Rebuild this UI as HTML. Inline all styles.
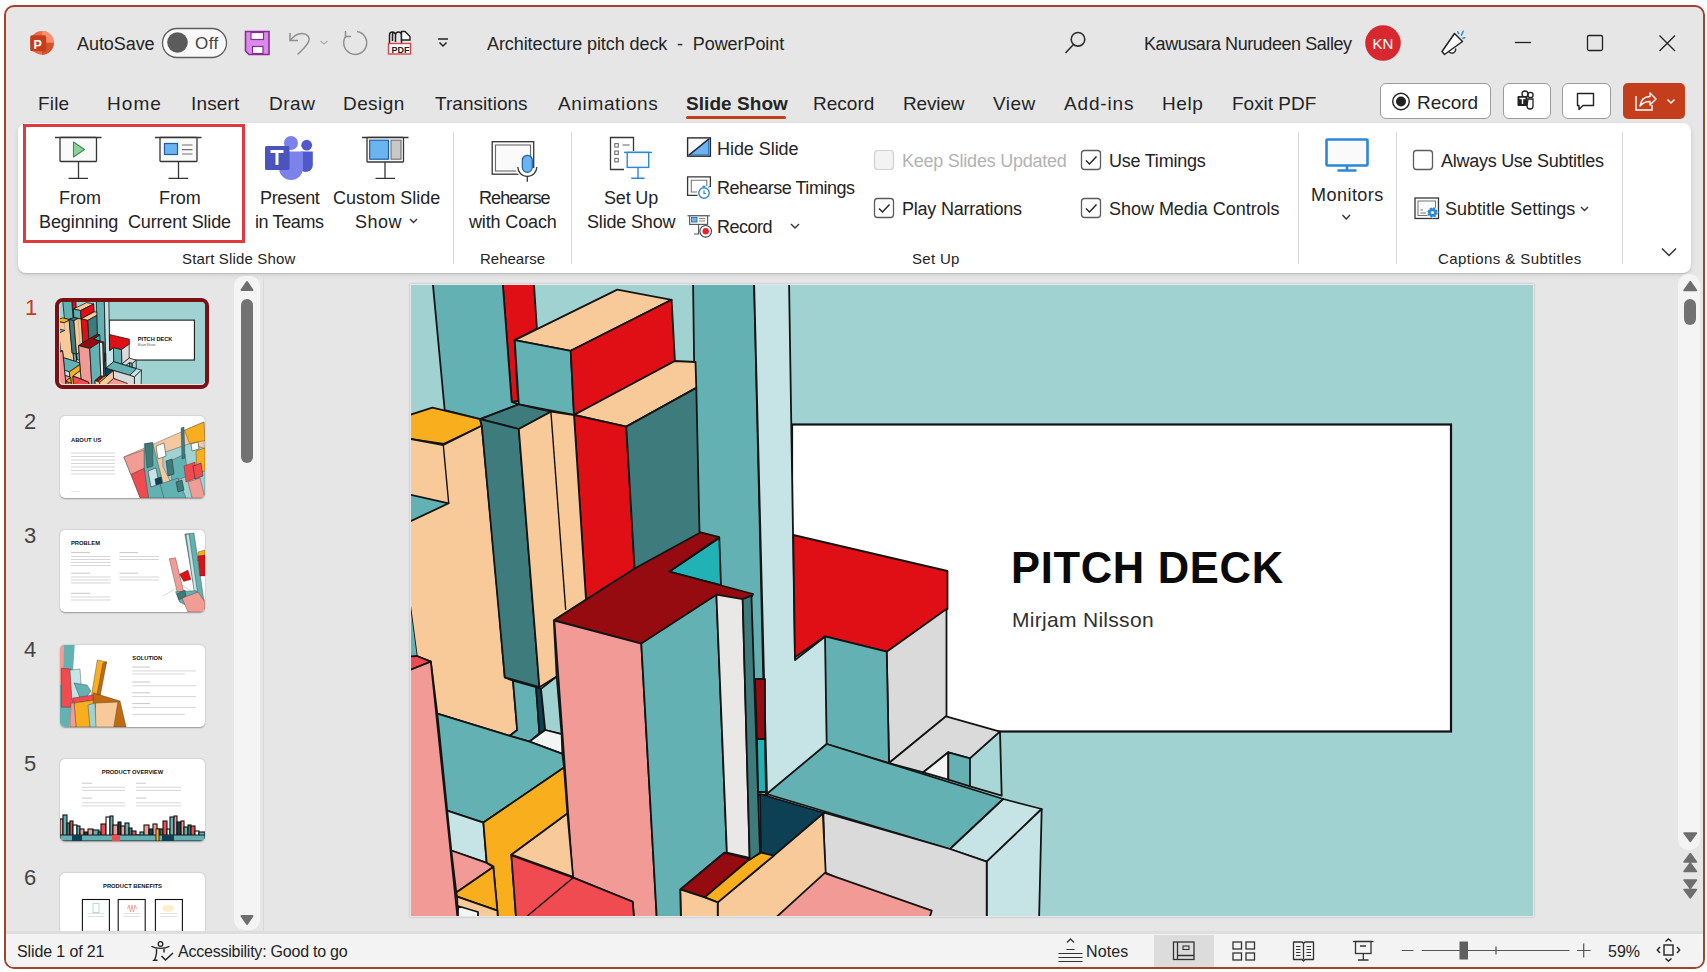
<!DOCTYPE html>
<html><head><meta charset="utf-8">
<style>
*{margin:0;padding:0;box-sizing:border-box}
html,body{width:1707px;height:972px;overflow:hidden;background:#fff}
body{font-family:"Liberation Sans",sans-serif;color:#242424;position:relative}
.a{position:absolute}
.t{position:absolute;white-space:nowrap;line-height:1}
#win{position:absolute;left:4px;top:5px;width:1701px;height:964px;border:2px solid #a4432d;border-radius:10px;background:#e6e6e6;overflow:hidden}
.tab{font-size:19px;top:94px}
.rb{font-size:18px}
.grp{font-size:15px}
svg{position:absolute;overflow:visible}
</style></head><body>
<div id="win"></div>

<!-- ============ TITLE BAR ============ -->
<svg style="left:0;top:0" width="1707" height="80">
  <!-- PowerPoint logo -->
  <circle cx="42" cy="42.8" r="11.9" fill="#ed6c47"/>
  <path d="M42 30.9 A11.9 11.9 0 0 1 53.9 42.8 L42 42.8Z" fill="#ff8f6b"/>
  <path d="M42 42.8 L53.9 42.8 A11.9 11.9 0 0 1 42 54.7Z" fill="#d35230"/>
  <rect x="30.2" y="35.2" width="16" height="16" rx="1.8" fill="#c43e1c"/>
  <text x="33.6" y="48.6" font-family="Liberation Sans" font-weight="bold" font-size="12.5" fill="#fff">P</text>
  <!-- toggle -->
  <rect x="162.5" y="28.5" width="64" height="29" rx="14.5" fill="#fafafa" stroke="#5e5e5e" stroke-width="1.3"/>
  <circle cx="177.5" cy="42.5" r="10.3" fill="#5b5b5b"/>
  <!-- save -->
  <path d="M245.5 31.5 H269 V54.5 H249 L245.5 51Z" fill="#d98be8" stroke="#8b2a9b" stroke-width="1.6"/>
  <rect x="251" y="32.5" width="12.5" height="7" fill="#fff" stroke="#8b2a9b" stroke-width="1.2"/>
  <rect x="252.5" y="46.5" width="10.5" height="7" fill="#fff" stroke="#8b2a9b" stroke-width="1.2"/>
  <!-- undo -->
  <path d="M290 33 V40.5 H298" fill="none" stroke="#8f8f8f" stroke-width="1.5"/>
  <path d="M290.5 40 C296 33 304 31.5 308 36 C311 40 308 45 297.5 54.5" fill="none" stroke="#8f8f8f" stroke-width="1.5"/>
  <path d="M320.5 41 L324 44 L327.5 41" fill="none" stroke="#a8a8a8" stroke-width="1.1"/>
  <!-- redo -->
  <path d="M346 36 A11.5 11.5 0 1 0 357 31.5" fill="none" stroke="#8f8f8f" stroke-width="1.5"/>
  <path d="M345.5 31 V36.5 H351" fill="none" stroke="#8f8f8f" stroke-width="1.5"/>
  <!-- pdf -->
  <path d="M389.5 43 V35 A3 3 0 0 1 395.5 35 V42 M392.5 41 V34.5 A1.5 1.5 0 0 1 395.5 34 M395.5 42 V35 A3 3 0 0 1 401.5 35 V43" fill="none" stroke="#222" stroke-width="1.5"/>
  <path d="M401.5 31.5 H405 L410 36.5 V40 H401.5Z" fill="#fff" stroke="#222" stroke-width="1.4"/>
  <rect x="388.5" y="43.5" width="22" height="10.5" fill="#fff" stroke="#d9434a" stroke-width="1.4"/>
  <text x="391.5" y="52.5" font-family="Liberation Sans" font-size="9" font-weight="bold" fill="#222">PDF</text>
  <!-- customize -->
  <path d="M438 39 H448" stroke="#222" stroke-width="1.5"/>
  <path d="M439.5 42.5 L443 46 L446.5 42.5" fill="none" stroke="#222" stroke-width="1.5"/>
  <!-- search -->
  <circle cx="1078" cy="39.3" r="6.8" fill="none" stroke="#2e2e2e" stroke-width="1.6"/>
  <path d="M1073.5 44.5 L1065.5 53" stroke="#2e2e2e" stroke-width="1.6"/>
  <!-- KN -->
  <circle cx="1383" cy="43" r="17.8" fill="#d7282f"/>
  <text x="1372.5" y="49" font-family="Liberation Sans" font-size="15" fill="#fff">KN</text>
  <!-- megaphone -->
  <path d="M1448.5 50.5 A3.6 3.6 0 0 0 1455.5 48.5" fill="#fafafa" stroke="#222" stroke-width="1.4"/>
  <path d="M1442 51.5 L1454.5 33.5 L1462.5 41.5 L1444.5 54.5Z" fill="#fafafa" stroke="#222" stroke-width="1.5" stroke-linejoin="round"/>
  <path d="M1457.8 31.8 L1458.6 33.5 M1463.2 31.2 L1461.4 35.2 M1464.8 37.8 L1462.8 38.2" stroke="#2b88d8" stroke-width="1.5" stroke-linecap="round"/>
  <!-- window controls -->
  <path d="M1515 42.5 H1531" stroke="#222" stroke-width="1.3"/>
  <rect x="1587.5" y="35.5" width="15" height="15" rx="1.5" fill="none" stroke="#222" stroke-width="1.3"/>
  <path d="M1659.5 35.5 L1675 51 M1675 35.5 L1659.5 51" stroke="#222" stroke-width="1.3"/>
</svg>
<div class="t" style="left:77px;top:35px;font-size:18px;letter-spacing:-0.06px">AutoSave</div>
<div class="t" style="left:195px;top:35px;font-size:17px;color:#444;letter-spacing:0.41px">Off</div>
<div class="t" style="left:487px;top:35px;font-size:18px;letter-spacing:-0.08px">Architecture pitch deck&nbsp; - &nbsp;PowerPoint</div>
<div class="t" style="left:1144px;top:35px;font-size:18px;letter-spacing:-0.44px">Kawusara Nurudeen Salley</div>

<!-- ============ TABS ============ -->
<div class="t tab" style="left:38px;letter-spacing:0.17px">File</div>
<div class="t tab" style="left:107px;letter-spacing:1.08px">Home</div>
<div class="t tab" style="left:191px;letter-spacing:0.16px">Insert</div>
<div class="t tab" style="left:269px;letter-spacing:0.51px">Draw</div>
<div class="t tab" style="left:343px;letter-spacing:0.41px">Design</div>
<div class="t tab" style="left:435px;letter-spacing:0.04px">Transitions</div>
<div class="t tab" style="left:558px;letter-spacing:0.65px">Animations</div>
<div class="t tab" style="left:686px;font-weight:bold;letter-spacing:0.06px">Slide Show</div>
<div class="a" style="left:686px;top:116px;width:100px;height:3px;background:#c43e1c;border-radius:2px"></div>
<div class="t tab" style="left:813px;letter-spacing:0.01px">Record</div>
<div class="t tab" style="left:903px;letter-spacing:-0.15px">Review</div>
<div class="t tab" style="left:993px;letter-spacing:0.44px">View</div>
<div class="t tab" style="left:1064px;letter-spacing:0.83px">Add-ins</div>
<div class="t tab" style="left:1162px;letter-spacing:0.61px">Help</div>
<div class="t tab" style="left:1232px;letter-spacing:-0.02px">Foxit PDF</div>

<!-- right buttons -->
<div class="a" style="left:1380px;top:83px;width:111px;height:36px;background:#fff;border:1px solid #9c9c9c;border-radius:6px"></div>
<div class="a" style="left:1503px;top:83px;width:48px;height:36px;background:#fff;border:1px solid #9c9c9c;border-radius:6px"></div>
<div class="a" style="left:1562px;top:83px;width:49px;height:36px;background:#fff;border:1px solid #9c9c9c;border-radius:6px"></div>
<div class="a" style="left:1623px;top:83px;width:62px;height:36px;background:#c43e1c;border-radius:5px"></div>
<svg style="left:0;top:0" width="1707" height="130">
  <circle cx="1401" cy="101.5" r="8.3" fill="none" stroke="#222" stroke-width="1.4"/>
  <circle cx="1401" cy="101.5" r="5" fill="#222"/>
  <!-- teams mono -->
  <circle cx="1530.5" cy="95" r="2.6" fill="none" stroke="#222" stroke-width="1.3"/>
  <path d="M1528 99 H1533 V106 A3 3 0 0 1 1527 106Z" fill="none" stroke="#222" stroke-width="1.3"/>
  <circle cx="1525" cy="94" r="3" fill="none" stroke="#222" stroke-width="1.3"/>
  <rect x="1517.5" y="96" width="10" height="10" rx="1" fill="#222"/>
  <path d="M1519.5 98.5 H1525.5 M1522.5 98.5 V104" stroke="#fff" stroke-width="1.4"/>
  <!-- comment -->
  <path d="M1577.5 93.5 H1593.5 V105.5 H1583 L1579 109.5 V105.5 H1577.5Z" fill="none" stroke="#222" stroke-width="1.4" stroke-linejoin="round"/>
  <!-- share -->
  <path d="M1636 96 V110 H1652 V105" fill="none" stroke="#fff" stroke-width="1.5"/>
  <path d="M1640 106 C1641 99 1645 96.5 1650 96.5 V93 L1656 99 L1650 105 V101.5 C1646 101.5 1642.5 103 1640 106Z" fill="none" stroke="#fff" stroke-width="1.4" stroke-linejoin="round"/>
  <path d="M1667.5 99.5 L1671 103 L1674.5 99.5" fill="none" stroke="#fff" stroke-width="1.5"/>
</svg>
<div class="t" style="left:1417px;top:93px;font-size:19px;letter-spacing:-0.04px">Record</div>

<!-- ============ RIBBON ============ -->
<div class="a" style="left:18px;top:123px;width:1673px;height:150px;background:#fff;border-radius:8px;box-shadow:0 1px 1px rgba(0,0,0,.12),0 2px 5px rgba(0,0,0,.10)"></div>
<div class="a" style="left:23px;top:124px;width:222px;height:119px;border:3px solid #e0393e"></div>
<!-- separators -->
<div class="a" style="left:453px;top:132px;width:1px;height:132px;background:#d6d6d6"></div>
<div class="a" style="left:571px;top:132px;width:1px;height:132px;background:#d6d6d6"></div>
<div class="a" style="left:1298px;top:132px;width:1px;height:132px;background:#d6d6d6"></div>
<div class="a" style="left:1396px;top:132px;width:1px;height:132px;background:#d6d6d6"></div>
<div class="a" style="left:1622px;top:132px;width:1px;height:132px;background:#d6d6d6"></div>

<svg style="left:0;top:0" width="1707" height="280">
  <!-- From Beginning -->
  <g stroke="#363636" stroke-width="1.3" fill="none">
    <path d="M55 137.5 H101.5"/>
    <rect x="60" y="137.5" width="36.5" height="24" rx="0.8" fill="#fafafa"/>
    <path d="M78.5 161.5 V178.3 M68.5 178.3 H88"/>
  </g>
  <path d="M73.5 142 L84.5 149.5 L73.5 157Z" fill="#8fd19e" stroke="#3a8d4f" stroke-width="1.1" stroke-linejoin="round"/>
  <!-- From Current -->
  <g stroke="#363636" stroke-width="1.3" fill="none">
    <path d="M155 137.5 H201.5"/>
    <rect x="160" y="137.5" width="37" height="24" rx="0.8" fill="#fafafa"/>
    <path d="M178.5 161.5 V178.3 M168.5 178.3 H188"/>
  </g>
  <rect x="164.5" y="143.5" width="13" height="11" fill="#6cb4ef" stroke="#1a5fa8" stroke-width="1.2"/>
  <path d="M182 145 H192.5 M182 149.6 H192.5 M182 154 H192.5" stroke="#707070" stroke-width="1.1"/>
  <!-- Teams -->
  <circle cx="291" cy="143" r="7" fill="#7b83eb"/>
  <circle cx="306.7" cy="145.2" r="5.4" fill="#5059c9"/>
  <path d="M301 151.5 H312.8 V165 A7 7 0 0 1 301 170Z" fill="#5059c9"/>
  <path d="M279 151.5 H303 V168 A12 12 0 0 1 279 168Z" fill="#7b83eb"/>
  <rect x="265" y="146" width="24.5" height="24" rx="1.5" fill="#4b53bc"/>
  <path d="M270.5 151.5 H283.5 M277 151.5 V165" stroke="#fff" stroke-width="3"/>
  <!-- Custom slide show -->
  <g stroke="#363636" stroke-width="1.3" fill="none">
    <path d="M362 137.5 H408.5"/>
    <rect x="367" y="137.5" width="36.5" height="24.5" rx="0.8" fill="#fafafa"/>
    <path d="M385 162 V178.3 M375.5 178.3 H395"/>
  </g>
  <rect x="369.7" y="140.2" width="18.8" height="19" fill="#6cb4ef" stroke="#1a5fa8" stroke-width="1.2"/>
  <rect x="391" y="140.2" width="10" height="19" fill="#c8c8c8" stroke="#6e6e6e" stroke-width="1.1"/>
  <!-- Rehearse with coach -->
  <rect x="492.2" y="141.7" width="41.5" height="32.5" fill="#fafafa" stroke="#363636" stroke-width="1.3"/>
  <rect x="495.5" y="145" width="35" height="26" fill="none" stroke="#6a6a6a" stroke-width="1.1"/>
  <path d="M517.5 168 A9.8 9.8 0 0 0 537 168" fill="#fff" stroke="#fff" stroke-width="4"/>
  <path d="M517.8 167 A9.5 9.5 0 0 0 536.8 167 M527.3 176.5 V181.7" fill="none" stroke="#363636" stroke-width="1.3"/>
  <rect x="522.3" y="155.3" width="10" height="17" rx="5" fill="#6cb4ef" stroke="#1a5fa8" stroke-width="1.2"/>
  <!-- Set up slide show -->
  <path d="M624 169.5 H610.5 V137.5 H633.5 V151" fill="none" stroke="#363636" stroke-width="1.3"/>
  <rect x="614.8" y="143.6" width="3.5" height="3.5" fill="none" stroke="#707070" stroke-width="1.1"/>
  <rect x="614.8" y="151" width="3.5" height="3.5" fill="none" stroke="#707070" stroke-width="1.1"/>
  <rect x="614.8" y="158.4" width="3.5" height="3.5" fill="none" stroke="#707070" stroke-width="1.1"/>
  <path d="M622.5 145 H629.7" stroke="#707070" stroke-width="1.1"/>
  <g stroke="#2b88d8" stroke-width="1.4" fill="none">
    <path d="M624 152.4 H652"/>
    <rect x="627.2" y="152.4" width="21.5" height="15" fill="#fafafa"/>
    <path d="M638 167.4 V178.3 M631.3 178.3 H644.6"/>
  </g>
  <!-- Hide slide -->
  <rect x="687.6" y="137.9" width="22.8" height="18.3" fill="#fafafa" stroke="#2a2a2a" stroke-width="1.4"/>
  <path d="M689.5 155 L708.8 139 V155Z" fill="#6cb4ef" stroke="#1a5fa8" stroke-width="1.1" stroke-linejoin="round"/>
  <path d="M688.5 155.3 L709.5 138.5" stroke="#2a2a2a" stroke-width="1.3"/>
  <!-- Rehearse timings -->
  <path d="M697.5 195.3 H687.6 V176.9 H710.4 V187" fill="none" stroke="#363636" stroke-width="1.3"/>
  <path d="M697 192 H691.3 V180.3 H706.8 V186" fill="none" stroke="#777" stroke-width="1.1"/>
  <circle cx="704" cy="193" r="5.2" fill="#fff" stroke="#2b88d8" stroke-width="1.4"/>
  <path d="M704 190.5 V193.5 H706 M702.5 186.3 H705.5 M708.5 187.5 L710 186" stroke="#2b88d8" stroke-width="1.2" fill="none"/>
  <!-- Record small -->
  <path d="M687.4 215.8 H710" stroke="#555" stroke-width="1.1"/>
  <rect x="689.6" y="215.8" width="18" height="8.6" fill="#fafafa" stroke="#555" stroke-width="1.1"/>
  <rect x="691.5" y="217.5" width="5.5" height="4.5" fill="#6cb4ef" stroke="#1a5fa8" stroke-width="0.8"/>
  <path d="M699 218.5 H705 M699 221 H705" stroke="#888" stroke-width="1"/>
  <path d="M698.6 224.4 V234 H694" stroke="#555" stroke-width="1.1" fill="none"/>
  <circle cx="705.7" cy="231.3" r="5.8" fill="#fff" stroke="#444" stroke-width="1.1"/>
  <circle cx="705.7" cy="231.3" r="3.2" fill="#e8222b"/>
  <path d="M791 224 L795 228 L799 224" fill="none" stroke="#333" stroke-width="1.4"/>
  <!-- checkboxes -->
  <rect x="874.5" y="150.5" width="19" height="19" rx="3" fill="#f3f3f3" stroke="#cfcfcf" stroke-width="1.2"/>
  <rect x="1081.5" y="150.5" width="19" height="19" rx="3" fill="#fff" stroke="#5c5c5c" stroke-width="1.3"/>
  <path d="M1086 160.5 L1089.5 164 L1096.5 156.5" fill="none" stroke="#222" stroke-width="1.4"/>
  <rect x="874.5" y="198.5" width="19" height="19" rx="3" fill="#fff" stroke="#5c5c5c" stroke-width="1.3"/>
  <path d="M879 208.5 L882.5 212 L889.5 204.5" fill="none" stroke="#222" stroke-width="1.4"/>
  <rect x="1081.5" y="198.5" width="19" height="19" rx="3" fill="#fff" stroke="#5c5c5c" stroke-width="1.3"/>
  <path d="M1086 208.5 L1089.5 212 L1096.5 204.5" fill="none" stroke="#222" stroke-width="1.4"/>
  <rect x="1413.5" y="150.5" width="19" height="19" rx="3" fill="#fff" stroke="#5c5c5c" stroke-width="1.3"/>
  <!-- monitors -->
  <rect x="1326.5" y="139.5" width="41" height="26" rx="1" fill="#fafafa" stroke="#2b88d8" stroke-width="2.6"/>
  <path d="M1347 166 V169.5 M1337.5 170.5 H1356.5" stroke="#2b88d8" stroke-width="2.6"/>
  <path d="M1342.5 215 L1346.3 219 L1350 215" fill="none" stroke="#333" stroke-width="1.4"/>
  <!-- subtitle settings -->
  <rect x="1415" y="198" width="23.5" height="20.5" fill="#fafafa" stroke="#363636" stroke-width="1.3"/>
  <rect x="1418" y="201" width="17.5" height="14.5" fill="none" stroke="#777" stroke-width="1"/>
  <path d="M1420.5 210 H1423 M1420.5 213 H1426" stroke="#777" stroke-width="1"/>
  <circle cx="1432.5" cy="212.5" r="5.8" fill="#fff"/>
  <circle cx="1432.5" cy="212.5" r="4.2" fill="#2b88d8" stroke="#2b88d8" stroke-width="2" stroke-dasharray="2 1.3"/>
  <circle cx="1432.5" cy="212.5" r="1.6" fill="#fff"/>
  <path d="M1581 207 L1584.5 210.5 L1588 207" fill="none" stroke="#333" stroke-width="1.4"/>
  <path d="M410 219 L413.5 222.5 L417 219" fill="none" stroke="#333" stroke-width="1.4"/>
  <path d="M1662 248.5 L1669 255.5 L1676 248.5" fill="none" stroke="#333" stroke-width="1.5"/>
</svg>

<!-- ribbon labels -->
<div class="t rb" style="left:59px;top:189px;letter-spacing:0.0px">From</div>
<div class="t rb" style="left:39px;top:213px;letter-spacing:-0.09px">Beginning</div>
<div class="t rb" style="left:159px;top:189px;letter-spacing:-0.12px">From</div>
<div class="t rb" style="left:128px;top:213px;letter-spacing:-0.17px">Current Slide</div>
<div class="t rb" style="left:260px;top:189px;letter-spacing:-0.36px">Present</div>
<div class="t rb" style="left:255px;top:213px;letter-spacing:-0.38px">in Teams</div>
<div class="t rb" style="left:333px;top:189px;letter-spacing:0.03px">Custom Slide</div>
<div class="t rb" style="left:355px;top:213px;letter-spacing:0.52px">Show</div>
<div class="t grp" style="left:182px;top:251px;letter-spacing:0.16px">Start Slide Show</div>

<div class="t rb" style="left:479px;top:189px;letter-spacing:-0.92px">Rehearse</div>
<div class="t rb" style="left:469px;top:213px;letter-spacing:-0.13px">with Coach</div>
<div class="t grp" style="left:480px;top:251px;letter-spacing:-0.01px">Rehearse</div>

<div class="t rb" style="left:604px;top:189px;letter-spacing:-0.17px">Set Up</div>
<div class="t rb" style="left:587px;top:213px;letter-spacing:-0.17px">Slide Show</div>
<div class="t rb" style="left:717px;top:140px;letter-spacing:-0.05px">Hide Slide</div>
<div class="t rb" style="left:717px;top:179px;letter-spacing:-0.47px">Rehearse Timings</div>
<div class="t rb" style="left:717px;top:218px;letter-spacing:-0.52px">Record</div>

<div class="t rb" style="left:902px;top:152px;color:#b3b3b3;letter-spacing:-0.24px">Keep Slides Updated</div>
<div class="t rb" style="left:1109px;top:152px;letter-spacing:-0.23px">Use Timings</div>
<div class="t rb" style="left:902px;top:200px;letter-spacing:-0.22px">Play Narrations</div>
<div class="t rb" style="left:1109px;top:200px;letter-spacing:-0.03px">Show Media Controls</div>
<div class="t grp" style="left:912px;top:251px;letter-spacing:0.31px">Set Up</div>

<div class="t rb" style="left:1311px;top:186px;letter-spacing:0.47px">Monitors</div>
<div class="t rb" style="left:1441px;top:152px;letter-spacing:-0.27px">Always Use Subtitles</div>
<div class="t rb" style="left:1445px;top:200px;letter-spacing:0.01px">Subtitle Settings</div>
<div class="t grp" style="left:1438px;top:251px;letter-spacing:0.43px">Captions &amp; Subtitles</div>

<!-- ============ LEFT PANE ============ -->
<div class="a" style="left:234px;top:276px;width:26px;height:654px;background:#f4f4f4;border-radius:10px"></div>
<div class="a" style="left:263px;top:274px;width:1px;height:658px;background:#d9d9d9"></div>
<svg style="left:0;top:0" width="300" height="940">
  <path d="M241.5 290 L247 282 L252.5 290Z" fill="#6e6e6e" stroke="#6e6e6e" stroke-width="2" stroke-linejoin="round"/>
  <rect x="241" y="299" width="12" height="164" rx="6" fill="#727272"/>
  <path d="M241.5 916 L247 924 L252.5 916Z" fill="#6e6e6e" stroke="#6e6e6e" stroke-width="2" stroke-linejoin="round"/>
</svg>
<div class="t" style="left:25px;top:297px;font-size:22px;color:#c43e1c">1</div>
<div class="t" style="left:24px;top:411px;font-size:22px;color:#444">2</div>
<div class="t" style="left:24px;top:525px;font-size:22px;color:#444">3</div>
<div class="t" style="left:24px;top:639px;font-size:22px;color:#444">4</div>
<div class="t" style="left:24px;top:753px;font-size:22px;color:#444">5</div>
<div class="t" style="left:24px;top:867px;font-size:22px;color:#444">6</div>
<div class="a" style="left:55px;top:298px;width:154px;height:91px;border:4px solid #7a0f14;border-radius:8px"></div>
<div class="a" style="left:60px;top:302px;width:145px;height:82px;overflow:hidden;border-radius:4px"><svg style="left:0;top:0" width="145" height="82" viewBox="411 285 1122 631" preserveAspectRatio="none"><rect x="411" y="285" width="1122" height="631" fill="#a1d2d2"/><rect x="792" y="424.5" width="659" height="307" fill="#fff" stroke="#111" stroke-width="8"/><polygon points="693.0,279.0 754.0,279.0 766.0,795.0 700.0,795.0" fill="#63b1b3" stroke="#141414" stroke-width="6" stroke-linejoin="round"/>
<polygon points="754.0,279.0 789.0,279.0 795.0,660.0 826.0,636.0 827.0,744.0 767.0,795.0" fill="#c6e4e5" stroke="#141414" stroke-width="6" stroke-linejoin="round"/>
<polygon points="755.0,679.0 765.0,679.0 765.0,739.0 757.0,739.0" fill="#960b10" stroke="#141414" stroke-width="6" stroke-linejoin="round"/>
<polygon points="757.0,739.0 765.0,739.0 766.0,792.0 758.0,792.0" fill="#21b2b5" stroke="#141414" stroke-width="6" stroke-linejoin="round"/>
<polygon points="793.3,535.0 947.5,571.0 947.5,609.0 886.7,651.7 825.0,636.3 795.0,657.3" fill="#e00f16" stroke="#141414" stroke-width="6" stroke-linejoin="round"/>
<polygon points="886.7,651.7 946.5,609.0 946.5,716.3 889.0,763.0" fill="#dadada" stroke="#141414" stroke-width="6" stroke-linejoin="round"/>
<polygon points="825.0,636.3 886.7,651.7 889.0,763.0 826.7,744.0" fill="#63b1b3" stroke="#141414" stroke-width="6" stroke-linejoin="round"/>
<polygon points="889.0,763.0 946.0,716.3 1000.0,731.7 970.0,758.3 948.3,752.3 923.3,772.3" fill="#dadada" stroke="#141414" stroke-width="6" stroke-linejoin="round"/>
<polygon points="923.3,772.3 948.3,752.3 948.3,779.7" fill="#f3f5f5" stroke="#141414" stroke-width="6" stroke-linejoin="round"/>
<polygon points="948.3,752.3 970.0,758.3 970.0,786.3 948.3,779.7" fill="#63b1b3" stroke="#141414" stroke-width="6" stroke-linejoin="round"/>
<polygon points="970.0,758.3 1000.0,731.7 1001.7,795.7 970.0,786.3" fill="#a9d6d6" stroke="#141414" stroke-width="6" stroke-linejoin="round"/>
<polygon points="766.7,794.0 826.7,744.0 1003.3,799.0 950.0,849.0" fill="#63b1b3" stroke="#141414" stroke-width="6" stroke-linejoin="round"/>
<polygon points="950.0,849.0 1003.3,799.0 1041.7,809.0 986.7,861.7" fill="#c6e4e5" stroke="#141414" stroke-width="6" stroke-linejoin="round"/>
<polygon points="986.7,861.7 1041.7,809.0 1039.0,922.0 986.7,922.0" fill="#c6e4e5" stroke="#141414" stroke-width="6" stroke-linejoin="round"/>
<polygon points="823.3,812.3 950.0,849.0 986.7,861.7 986.7,922.0 930.0,922.0 825.0,872.3" fill="#dadada" stroke="#141414" stroke-width="6" stroke-linejoin="round"/>
<polygon points="760.0,794.0 824.3,813.0 773.8,855.6 760.9,852.7" fill="#0d4055" stroke="#141414" stroke-width="6" stroke-linejoin="round"/>
<polygon points="771.0,922.0 822.0,872.2 931.7,910.7 928.3,922.0" fill="#f29b96" stroke="#141414" stroke-width="6" stroke-linejoin="round"/>
<polygon points="717.7,902.4 773.8,855.6 822.8,813.8 825.7,872.2 771.0,922.0 717.7,922.0" fill="#f8ca9a" stroke="#141414" stroke-width="6" stroke-linejoin="round"/>
<polygon points="680.2,889.4 724.2,852.7 749.4,859.2 704.7,897.4" fill="#960b10" stroke="#141414" stroke-width="6" stroke-linejoin="round"/>
<polygon points="704.7,897.4 749.4,859.2 760.9,852.7 773.8,855.6 717.7,902.4" fill="#f9ae1d" stroke="#141414" stroke-width="6" stroke-linejoin="round"/>
<polygon points="680.2,889.4 704.7,897.4 717.7,902.4 717.7,922.0 681.0,922.0" fill="#f8ca9a" stroke="#141414" stroke-width="6" stroke-linejoin="round"/>
<polygon points="669.1,571.7 719.3,538.0 721.0,585.0" fill="#21b2b5" stroke="#141414" stroke-width="6" stroke-linejoin="round"/>
<polygon points="553.8,620.2 693.8,530.6 719.3,537.2 669.1,571.7 753.1,594.0 751.4,597.0 641.3,643.6" fill="#960b10" stroke="#141414" stroke-width="6" stroke-linejoin="round"/>
<polygon points="554.3,620.7 641.3,643.6 657.0,922.0 634.3,922.0 632.7,902.0 572.7,877.3" fill="#f29b96" stroke="#141414" stroke-width="6" stroke-linejoin="round"/>
<polygon points="641.3,643.6 716.4,594.7 726.9,852.7 724.2,852.7 680.2,889.4 681.0,922.0 657.0,922.0" fill="#63b1b3" stroke="#141414" stroke-width="6" stroke-linejoin="round"/>
<polygon points="716.4,594.7 742.7,599.2 749.7,858.0 726.9,852.7" fill="#e9e8e6" stroke="#141414" stroke-width="6" stroke-linejoin="round"/>
<polygon points="742.7,599.2 751.4,595.7 760.0,852.7 749.7,859.7" fill="#3e7b7d" stroke="#141414" stroke-width="6" stroke-linejoin="round"/>
<polygon points="502.4,279.0 533.6,279.0 536.9,328.6 514.7,340.1 518.0,401.0 511.7,401.9" fill="#e00f16" stroke="#141414" stroke-width="6" stroke-linejoin="round"/>
<polygon points="432.4,279.0 502.4,279.0 511.7,401.9 518.8,404.3 480.1,419.2 444.7,410.1" fill="#63b1b3" stroke="#141414" stroke-width="6" stroke-linejoin="round"/>
<polygon points="514.7,340.1 617.3,289.6 671.6,299.8 570.7,350.8" fill="#f8ca9a" stroke="#141414" stroke-width="6" stroke-linejoin="round"/>
<polygon points="514.7,340.1 570.7,350.8 574.0,415.0 518.8,404.3" fill="#63b1b3" stroke="#141414" stroke-width="6" stroke-linejoin="round"/>
<polygon points="570.7,350.8 671.6,299.8 674.9,361.0 574.0,415.0" fill="#e00f16" stroke="#141414" stroke-width="6" stroke-linejoin="round"/>
<polygon points="574.0,415.0 674.9,361.0 695.5,362.0 696.3,387.9 626.3,426.6" fill="#f8ca9a" stroke="#141414" stroke-width="6" stroke-linejoin="round"/>
<polygon points="574.0,415.0 626.3,426.6 634.6,568.5 586.0,599.6" fill="#e00f16" stroke="#141414" stroke-width="6" stroke-linejoin="round"/>
<polygon points="626.3,426.6 696.3,387.9 699.5,533.0 634.6,568.5" fill="#3e7b7d" stroke="#141414" stroke-width="6" stroke-linejoin="round"/>
<polygon points="404.0,416.7 432.4,407.6 480.1,419.2 481.8,425.7 443.9,443.9 404.0,438.1" fill="#f9ae1d" stroke="#141414" stroke-width="6" stroke-linejoin="round"/>
<polygon points="404.0,437.7 443.3,445.0 481.8,425.7 498.2,600.0 504.8,677.4 513.0,680.7 517.2,730.0 509.8,735.8 437.3,713.6 430.8,661.7 416.8,656.0 404.0,560.0" fill="#f8ca9a" stroke="#141414" stroke-width="6" stroke-linejoin="round"/>
<polyline points="443.3,445.0 448.7,503.3" fill="none" stroke="#111" stroke-width="1.4"/>
<polygon points="404.0,493.3 448.7,503.3 404.0,524.3" fill="#63b1b3" stroke="#141414" stroke-width="6" stroke-linejoin="round"/>
<polygon points="404.0,560.0 416.8,656.0 404.0,656.0" fill="#63b1b3"/>
<polygon points="480.1,419.2 518.8,404.3 550.9,411.7 518.8,429.0" fill="#3e7b7d" stroke="#141414" stroke-width="6" stroke-linejoin="round"/>
<polygon points="480.1,419.2 518.8,429.0 539.4,687.2 504.8,677.4 481.8,425.7" fill="#3e7b7d" stroke="#141414" stroke-width="6" stroke-linejoin="round"/>
<polygon points="518.8,429.0 550.9,411.7 574.0,415.0 586.0,599.6 553.8,620.2 556.7,676.5 539.4,687.2" fill="#f8ca9a" stroke="#141414" stroke-width="6" stroke-linejoin="round"/>
<polyline points="550.9,411.7 565.7,609.9" fill="none" stroke="#111" stroke-width="1.4"/>
<polygon points="513.0,680.7 536.1,687.2 539.4,733.3 529.5,741.6 509.8,735.8 517.2,730.0" fill="#63b1b3" stroke="#141414" stroke-width="6" stroke-linejoin="round"/>
<polygon points="536.1,687.2 541.0,688.9 545.2,730.0 539.4,733.3" fill="#0d4055" stroke="#141414" stroke-width="6" stroke-linejoin="round"/>
<polygon points="541.0,688.9 556.7,676.5 561.6,734.2 545.2,730.0" fill="#a1d2d2" stroke="#141414" stroke-width="6" stroke-linejoin="round"/>
<polygon points="529.5,741.6 545.2,730.0 561.6,734.2 562.4,753.9" fill="#f3f5f5" stroke="#141414" stroke-width="6" stroke-linejoin="round"/>
<polygon points="437.3,713.6 509.8,735.8 529.5,741.6 562.4,753.9 564.0,767.4 483.4,822.6 447.2,810.7" fill="#63b1b3" stroke="#141414" stroke-width="6" stroke-linejoin="round"/>
<polygon points="404.0,656.8 416.8,656.0 430.8,661.7 404.0,672.4" fill="#f04b51" stroke="#141414" stroke-width="6" stroke-linejoin="round"/>
<polygon points="404.0,672.4 430.8,661.7 458.0,922.0 404.0,922.0" fill="#f29b96" stroke="#141414" stroke-width="6" stroke-linejoin="round"/>
<polygon points="447.2,810.7 483.4,822.6 486.7,862.9 451.3,850.5" fill="#c6e4e5" stroke="#141414" stroke-width="6" stroke-linejoin="round"/>
<polygon points="483.4,822.6 564.0,767.4 567.4,813.5 511.4,854.7 516.4,922.0 498.2,922.0 493.3,866.2 486.7,862.9" fill="#f9ae1d" stroke="#141414" stroke-width="6" stroke-linejoin="round"/>
<polygon points="511.4,854.7 567.4,813.5 573.1,876.9" fill="#f8ca9a" stroke="#141414" stroke-width="6" stroke-linejoin="round"/>
<polygon points="511.4,855.5 573.1,877.7 632.7,901.7 634.3,922.0 516.4,922.0" fill="#f04b51" stroke="#141414" stroke-width="6" stroke-linejoin="round"/>
<polyline points="573.1,877.7 526.2,917.0" fill="none" stroke="#111" stroke-width="1.4"/>
<polygon points="451.3,850.5 486.7,862.9 493.3,867.0 456.3,892.5" fill="#f29b96" stroke="#141414" stroke-width="6" stroke-linejoin="round"/>
<polygon points="456.3,892.5 493.3,867.0 497.4,910.6 457.1,896.6" fill="#f9ae1d" stroke="#141414" stroke-width="6" stroke-linejoin="round"/>
<polygon points="457.1,896.6 497.4,910.6 498.0,922.0 458.0,922.0" fill="#f8ca9a" stroke="#141414" stroke-width="6" stroke-linejoin="round"/>
<polygon points="458.0,906.0 478.0,912.0 478.0,922.0 458.0,922.0" fill="#f3f5f5" stroke="#141414" stroke-width="6" stroke-linejoin="round"/><text x="1013" y="584" font-family="Liberation Sans" font-weight="bold" font-size="44" fill="#111">PITCH DECK</text><text x="1013" y="627" font-family="Liberation Sans" font-size="21" fill="#555">Mirjam Nilsson</text></svg></div>
<div class="a" style="left:60px;top:416px;width:145px;height:82px;overflow:hidden;border-radius:5px;background:#fff;box-shadow:0 0.5px 1.5px rgba(0,0,0,.35);"><svg style="left:0;top:0" width="145" height="82" viewBox="0 0 145 82"><text x="11" y="25.8" font-family="Liberation Sans" font-size="5.8" font-weight="bold" fill="#111" text-anchor="start">ABOUT US</text><path d="M11.0 37.0 H55.0" stroke="#c4c4c4" stroke-width="0.7"/><path d="M11.0 40.5 H55.0" stroke="#c4c4c4" stroke-width="0.7"/><path d="M11.0 44.0 H55.0" stroke="#c4c4c4" stroke-width="0.7"/><path d="M11.0 47.5 H55.0" stroke="#c4c4c4" stroke-width="0.7"/><path d="M11.0 51.0 H55.0" stroke="#c4c4c4" stroke-width="0.7"/><path d="M11.0 54.5 H55.0" stroke="#c4c4c4" stroke-width="0.7"/><path d="M11.0 58.0 H55.0" stroke="#c4c4c4" stroke-width="0.7"/><path d="M11.0 75.5 H20.0" stroke="#ccc" stroke-width="0.5"/><polygon points="63.8,41.0 144.0,6.0 145.0,82.0 80.2,82.0" fill="#f5c9a0" stroke="#222" stroke-width="0.35"/><polygon points="63.8,41.0 84.3,33.8 84.3,52.3 71.0,58.5" fill="#f29c96" stroke="#222" stroke-width="0.35"/><polygon points="71.0,58.5 84.3,52.3 92.0,82.0 80.2,82.0" fill="#f04b51" stroke="#222" stroke-width="0.35"/><polygon points="124.5,14.2 144.0,6.0 145.0,24.5 129.6,27.6" fill="#f9ae1d" stroke="#222" stroke-width="0.35"/><polygon points="84.3,27.6 92.6,26.6 98.7,50.2 107.0,82.0 88.5,82.0 84.3,52.3" fill="#63b1b3" stroke="#222" stroke-width="0.35"/><polygon points="85.0,28.0 92.6,26.6 93.0,50.0 87.0,52.0" fill="#3e7b7d" stroke="#222" stroke-width="0.35"/><polygon points="102.9,36.9 129.6,27.6 145.0,32.7 145.0,82.0 118.3,82.0 102.9,50.2" fill="#a1d2d2" stroke="#222" stroke-width="0.35"/><polygon points="110.0,45.0 125.0,38.0 128.0,60.0 112.0,66.0" fill="#63b1b3" stroke="#222" stroke-width="0.35"/><polygon points="124.0,50.0 135.0,46.0 136.0,62.0 126.0,66.0" fill="#f04b51" stroke="#222" stroke-width="0.35"/><polygon points="121.0,12.0 124.0,11.0 125.0,42.0 122.0,43.0" fill="#3e7b7d" stroke="#222" stroke-width="0.35"/><polygon points="136.0,35.0 145.0,32.0 145.0,55.0 137.0,58.0" fill="#f9ae1d" stroke="#222" stroke-width="0.35"/><polygon points="100.0,68.0 118.0,62.0 126.0,82.0 104.0,82.0" fill="#63b1b3" stroke="#222" stroke-width="0.35"/><polygon points="128.0,66.0 140.0,62.0 145.0,82.0 132.0,82.0" fill="#f29c96" stroke="#222" stroke-width="0.35"/><polygon points="96.0,30.0 104.0,27.0 106.0,40.0 98.0,43.0" fill="#fff" stroke="#222" stroke-width="0.5"/><polygon points="106.0,45.0 112.0,43.0 114.0,58.0 108.0,60.0" fill="#3e7b7d" stroke="#222" stroke-width="0.5"/><polygon points="88.0,55.0 96.0,52.0 99.0,68.0 91.0,71.0" fill="#c6e4e5" stroke="#222" stroke-width="0.5"/><polygon points="95.0,63.0 101.0,61.0 102.0,67.0 96.0,69.0" fill="#0d4055" stroke="#222" stroke-width="0.5"/><polygon points="131.0,28.0 138.0,26.0 139.0,33.0 132.0,35.0" fill="#fff" stroke="#222" stroke-width="0.5"/><polygon points="133.0,50.0 141.0,47.0 143.0,60.0 135.0,63.0" fill="#f04b51" stroke="#222" stroke-width="0.5"/><polygon points="116.0,66.0 122.0,64.0 124.0,74.0 118.0,76.0" fill="#3e7b7d" stroke="#222" stroke-width="0.5"/></svg></div>
<div class="a" style="left:60px;top:530px;width:145px;height:82px;overflow:hidden;border-radius:5px;background:#fff;box-shadow:0 0.5px 1.5px rgba(0,0,0,.35);"><svg style="left:0;top:0" width="145" height="82" viewBox="0 0 145 82"><text x="11" y="15.2" font-family="Liberation Sans" font-size="5.8" font-weight="bold" fill="#111" text-anchor="start">PROBLEM</text><path d="M11.0 22.6 H30.0" stroke="#b0b0b0" stroke-width="0.7"/><path d="M11.0 43.2 H30.0" stroke="#b0b0b0" stroke-width="0.7"/><path d="M11.0 63.3 H30.0" stroke="#b0b0b0" stroke-width="0.7"/><path d="M59.4 22.6 H78.0" stroke="#b0b0b0" stroke-width="0.7"/><path d="M59.4 43.2 H78.0" stroke="#b0b0b0" stroke-width="0.7"/><path d="M11.0 26.5 H50.7" stroke="#c4c4c4" stroke-width="0.7"/><path d="M11.0 29.5 H50.7" stroke="#c4c4c4" stroke-width="0.7"/><path d="M11.0 32.5 H50.7" stroke="#c4c4c4" stroke-width="0.7"/><path d="M11.0 35.5 H50.7" stroke="#c4c4c4" stroke-width="0.7"/><path d="M11.0 47.0 H50.7" stroke="#c4c4c4" stroke-width="0.7"/><path d="M11.0 50.0 H50.7" stroke="#c4c4c4" stroke-width="0.7"/><path d="M11.0 53.0 H50.7" stroke="#c4c4c4" stroke-width="0.7"/><path d="M11.0 67.0 H50.7" stroke="#c4c4c4" stroke-width="0.7"/><path d="M11.0 70.0 H50.7" stroke="#c4c4c4" stroke-width="0.7"/><path d="M59.4 26.5 H99.0" stroke="#c4c4c4" stroke-width="0.7"/><path d="M59.4 29.5 H99.0" stroke="#c4c4c4" stroke-width="0.7"/><path d="M59.4 47.0 H99.0" stroke="#c4c4c4" stroke-width="0.7"/><path d="M59.4 50.0 H99.0" stroke="#c4c4c4" stroke-width="0.7"/><path d="M103 66 L122 55 L145 70 L130 82" fill="none" stroke="#999" stroke-width="0.4"/><polygon points="124.8,4.1 134.0,3.0 145.0,78.0 138.1,82.0" fill="#63b1b3" stroke="#222" stroke-width="0.35"/><polygon points="126.0,4.5 129.0,4.0 140.0,80.0 137.0,81.0" fill="#c6e4e5" stroke="#222" stroke-width="0.35"/><polygon points="109.3,28.8 115.5,27.8 123.7,61.7 117.6,63.8" fill="#f29c96" stroke="#222" stroke-width="0.35"/><polygon points="119.6,44.2 127.9,40.1 131.0,49.4 123.7,51.4" fill="#e00f16" stroke="#222" stroke-width="0.35"/><polygon points="138.0,22.0 145.0,20.0 145.0,30.0 138.0,31.0" fill="#f9ae1d" stroke="#222" stroke-width="0.35"/><polygon points="138.0,26.0 145.0,25.0 145.0,46.0 140.0,46.0" fill="#e00f16" stroke="#222" stroke-width="0.35"/><polygon points="115.5,61.7 136.1,60.7 145.0,78.0 139.2,82.0 119.6,72.0" fill="#63b1b3" stroke="#222" stroke-width="0.35"/><polygon points="122.0,68.0 138.0,62.0 145.0,72.0 145.0,82.0 128.0,82.0" fill="#f29c96" stroke="#222" stroke-width="0.35"/><polygon points="117.0,64.0 125.0,60.0 126.0,66.0 119.0,70.0" fill="#3e7b7d" stroke="#222" stroke-width="0.35"/></svg></div>
<div class="a" style="left:60px;top:645px;width:145px;height:82px;overflow:hidden;border-radius:5px;background:#fff;box-shadow:0 0.5px 1.5px rgba(0,0,0,.35);"><svg style="left:0;top:0" width="145" height="82" viewBox="0 0 145 82"><text x="72.3" y="14.7" font-family="Liberation Sans" font-size="5.8" font-weight="bold" fill="#111" text-anchor="start">SOLUTION</text><path d="M72.3 22.1 H90.0" stroke="#b0b0b0" stroke-width="0.7"/><path d="M72.3 25.9 H136.0" stroke="#c4c4c4" stroke-width="0.7"/><path d="M72.3 37.0 H90.0" stroke="#b0b0b0" stroke-width="0.7"/><path d="M72.3 40.8 H136.0" stroke="#c4c4c4" stroke-width="0.7"/><path d="M72.3 47.8 H90.0" stroke="#b0b0b0" stroke-width="0.7"/><path d="M72.3 51.6 H136.0" stroke="#c4c4c4" stroke-width="0.7"/><path d="M72.3 58.6 H90.0" stroke="#b0b0b0" stroke-width="0.7"/><path d="M72.3 62.4 H136.0" stroke="#c4c4c4" stroke-width="0.7"/><path d="M72.3 29.0 H125.0" stroke="#c4c4c4" stroke-width="0.7"/><path d="M72.3 69.4 H125.0" stroke="#c4c4c4" stroke-width="0.7"/><polygon points="0.0,0.0 14.7,0.0 9.5,82.0 0.0,82.0" fill="#63b1b3"/><polygon points="0.0,0.0 4.0,0.0 3.0,40.0 0.0,40.0" fill="#f29c96"/><polygon points="1.3,23.1 10.6,24.1 13.7,62.2 1.3,62.2" fill="#f04b51" stroke="#222" stroke-width="0.35"/><polygon points="10.0,25.0 20.0,24.0 22.0,52.0 12.0,55.0" fill="#c6e4e5" stroke="#222" stroke-width="0.35"/><polygon points="14.0,38.0 27.0,40.0 31.0,46.0 22.0,58.0" fill="#63b1b3" stroke="#222" stroke-width="0.35"/><polygon points="37.3,14.9 46.6,16.9 35.3,56.0 31.2,51.9" fill="#f9ae1d" stroke="#222" stroke-width="0.35"/><polygon points="43.0,18.0 46.6,16.9 40.0,52.0 36.0,55.0" fill="#c06a12" stroke="#222" stroke-width="0.35"/><polygon points="12.6,53.0 33.2,50.0 35.0,55.0 14.0,58.0" fill="#f04b51" stroke="#222" stroke-width="0.35"/><polygon points="14.0,58.0 35.0,55.0 35.0,82.0 16.0,82.0" fill="#f9ae1d" stroke="#222" stroke-width="0.35"/><polygon points="11.0,58.0 14.0,58.0 16.0,82.0 10.0,82.0" fill="#f29c96" stroke="#222" stroke-width="0.35"/><polygon points="33.2,47.8 60.0,56.0 66.1,82.0 51.7,82.0 33.2,60.2" fill="#c06a12" stroke="#222" stroke-width="0.35"/><polygon points="35.3,58.1 57.9,57.0 53.8,82.0 35.3,82.0" fill="#f8ca9a" stroke="#222" stroke-width="0.35"/><polygon points="28.0,60.0 35.0,58.0 36.0,82.0 30.0,82.0" fill="#a1d2d2" stroke="#222" stroke-width="0.35"/></svg></div>
<div class="a" style="left:60px;top:759px;width:145px;height:82px;overflow:hidden;border-radius:5px;background:#fff;box-shadow:0 0.5px 1.5px rgba(0,0,0,.35);"><svg style="left:0;top:0" width="145" height="82" viewBox="0 0 145 82"><text x="72.5" y="14.7" font-family="Liberation Sans" font-size="5.8" font-weight="bold" fill="#111" text-anchor="middle">PRODUCT OVERVIEW</text><path d="M21.9 24.2 H32.0" stroke="#b0b0b0" stroke-width="0.7"/><path d="M21.9 39.1 H32.0" stroke="#b0b0b0" stroke-width="0.7"/><path d="M75.9 24.2 H86.0" stroke="#b0b0b0" stroke-width="0.7"/><path d="M75.9 39.1 H86.0" stroke="#b0b0b0" stroke-width="0.7"/><path d="M21.9 28.3 H65.0" stroke="#c4c4c4" stroke-width="0.7"/><path d="M21.9 31.4 H65.0" stroke="#c4c4c4" stroke-width="0.7"/><path d="M21.9 43.8 H65.0" stroke="#c4c4c4" stroke-width="0.7"/><path d="M21.9 46.9 H65.0" stroke="#c4c4c4" stroke-width="0.7"/><path d="M75.9 28.3 H121.0" stroke="#c4c4c4" stroke-width="0.7"/><path d="M75.9 31.4 H121.0" stroke="#c4c4c4" stroke-width="0.7"/><path d="M75.9 43.8 H121.0" stroke="#c4c4c4" stroke-width="0.7"/><path d="M75.9 46.9 H121.0" stroke="#c4c4c4" stroke-width="0.7"/><rect x="0" y="60" width="3" height="23" fill="#f29c96" stroke="#111" stroke-width="1.1"/><rect x="3" y="56" width="4" height="27" fill="#63b1b3" stroke="#111" stroke-width="1.1"/><rect x="7" y="64" width="3" height="19" fill="#3e7b7d" stroke="#111" stroke-width="1.1"/><rect x="10" y="62" width="3" height="21" fill="#f04b51" stroke="#111" stroke-width="1.1"/><rect x="13" y="66" width="4" height="17" fill="#fff" stroke="#111" stroke-width="1.1"/><rect x="17" y="67" width="3" height="16" fill="#63b1b3" stroke="#111" stroke-width="1.1"/><rect x="20" y="70" width="4" height="13" fill="#f29c96" stroke="#111" stroke-width="1.1"/><rect x="24" y="73" width="4" height="10" fill="#0d4055" stroke="#111" stroke-width="1.1"/><rect x="28" y="70" width="5" height="13" fill="#f29c96" stroke="#111" stroke-width="1.1"/><rect x="33" y="71" width="6" height="12" fill="#63b1b3" stroke="#111" stroke-width="1.1"/><rect x="38" y="73" width="3" height="10" fill="#3e7b7d" stroke="#111" stroke-width="1.1"/><rect x="41" y="65" width="5" height="18" fill="#f04b51" stroke="#111" stroke-width="1.1"/><rect x="46" y="58" width="4" height="25" fill="#fff" stroke="#111" stroke-width="1.1"/><rect x="50" y="57" width="3" height="26" fill="#63b1b3" stroke="#111" stroke-width="1.1"/><rect x="53" y="66" width="5" height="17" fill="#f29c96" stroke="#111" stroke-width="1.1"/><rect x="58" y="63" width="3" height="20" fill="#0d4055" stroke="#111" stroke-width="1.1"/><rect x="61" y="67" width="4" height="16" fill="#f29c96" stroke="#111" stroke-width="1.1"/><rect x="65" y="64" width="4" height="19" fill="#63b1b3" stroke="#111" stroke-width="1.1"/><rect x="69" y="69" width="3" height="14" fill="#3e7b7d" stroke="#111" stroke-width="1.1"/><rect x="72" y="72" width="4" height="11" fill="#f04b51" stroke="#111" stroke-width="1.1"/><rect x="76" y="76" width="4" height="7" fill="#fff" stroke="#111" stroke-width="1.1"/><rect x="80" y="73" width="4" height="10" fill="#63b1b3" stroke="#111" stroke-width="1.1"/><rect x="84" y="66" width="5" height="17" fill="#f29c96" stroke="#111" stroke-width="1.1"/><rect x="89" y="70" width="4" height="13" fill="#0d4055" stroke="#111" stroke-width="1.1"/><rect x="93" y="65" width="4" height="18" fill="#f29c96" stroke="#111" stroke-width="1.1"/><rect x="97" y="70" width="3" height="13" fill="#63b1b3" stroke="#111" stroke-width="1.1"/><rect x="100" y="70" width="3" height="13" fill="#3e7b7d" stroke="#111" stroke-width="1.1"/><rect x="103" y="62" width="4" height="21" fill="#f04b51" stroke="#111" stroke-width="1.1"/><rect x="107" y="70" width="3" height="13" fill="#fff" stroke="#111" stroke-width="1.1"/><rect x="110" y="58" width="4" height="25" fill="#63b1b3" stroke="#111" stroke-width="1.1"/><rect x="114" y="57" width="3" height="26" fill="#f29c96" stroke="#111" stroke-width="1.1"/><rect x="117" y="63" width="4" height="20" fill="#0d4055" stroke="#111" stroke-width="1.1"/><rect x="121" y="62" width="3" height="21" fill="#f29c96" stroke="#111" stroke-width="1.1"/><rect x="124" y="68" width="4" height="15" fill="#63b1b3" stroke="#111" stroke-width="1.1"/><rect x="128" y="66" width="3" height="17" fill="#3e7b7d" stroke="#111" stroke-width="1.1"/><rect x="131" y="67" width="4" height="16" fill="#f04b51" stroke="#111" stroke-width="1.1"/><rect x="135" y="72" width="4" height="11" fill="#fff" stroke="#111" stroke-width="1.1"/><rect x="139" y="73" width="6" height="10" fill="#63b1b3" stroke="#111" stroke-width="1.1"/><rect x="0" y="76" width="145" height="6" fill="#63b1b3" stroke="#111" stroke-width="0.9"/><rect x="12" y="76" width="10" height="6" fill="#0d4055"/><rect x="52" y="76" width="8" height="6" fill="#f04b51"/><rect x="102" y="76" width="12" height="6" fill="#0d4055"/><rect x="96" y="70" width="3" height="12" fill="#f9ae1d" stroke="#111" stroke-width="0.8"/></svg></div>
<div class="a" style="left:60px;top:873px;width:145px;height:58px;overflow:hidden;border-radius:5px 5px 0 0;background:#fff;box-shadow:0 0.5px 1.5px rgba(0,0,0,.35);"><svg style="left:0;top:0" width="145" height="82" viewBox="0 0 145 82"><text x="72.5" y="14.5" font-family="Liberation Sans" font-size="5.8" font-weight="bold" fill="#111" text-anchor="middle">PRODUCT BENEFITS</text><rect x="22.4" y="26.5" width="27" height="32" fill="#fff" stroke="#111" stroke-width="1.1"/><path d="M27.4 40.5 H44.4" stroke="#ccc" stroke-width="0.6"/><path d="M27.4 43.5 H44.4" stroke="#ccc" stroke-width="0.6"/><rect x="58.2" y="26.5" width="27" height="32" fill="#fff" stroke="#111" stroke-width="1.1"/><path d="M63.2 40.5 H80.2" stroke="#ccc" stroke-width="0.6"/><path d="M63.2 43.5 H80.2" stroke="#ccc" stroke-width="0.6"/><rect x="95.4" y="26.5" width="27" height="32" fill="#fff" stroke="#111" stroke-width="1.1"/><path d="M100.4 40.5 H117.4" stroke="#ccc" stroke-width="0.6"/><path d="M100.4 43.5 H117.4" stroke="#ccc" stroke-width="0.6"/><rect x="33" y="30.6" width="6" height="9" fill="none" stroke="#9fd4cf" stroke-width="0.8"/><path d="M67.5 36 L69 32 L70.5 39 L72 32 L73.5 39 L75 32 L76.5 36" fill="none" stroke="#f29c96" stroke-width="0.9"/><ellipse cx="108.4" cy="35.4" rx="6" ry="3.5" fill="#fbeec8"/></svg></div>

<!-- ============ RIGHT SCROLL ============ -->
<div class="a" style="left:1678px;top:274px;width:22px;height:576px;background:#f4f4f4;border-radius:10px"></div>
<svg style="left:0;top:0" width="1707" height="940">
  <path d="M1684 290.5 L1690.3 281.5 L1696.5 290.5Z" fill="#6e6e6e" stroke="#6e6e6e" stroke-width="1.5" stroke-linejoin="round"/>
  <rect x="1684" y="299" width="12" height="26" rx="6" fill="#727272"/>
  <path d="M1684 833 L1690.3 841.5 L1696.5 833Z" fill="#6e6e6e" stroke="#6e6e6e" stroke-width="1.5" stroke-linejoin="round"/>
  <path d="M1684 862 L1690.3 853.5 L1696.5 862Z M1684 871.5 L1690.3 863 L1696.5 871.5Z" fill="#6e6e6e" stroke="#6e6e6e" stroke-width="1.5" stroke-linejoin="round"/>
  <path d="M1684 880 L1690.3 888.5 L1696.5 880Z M1684 889.5 L1690.3 898 L1696.5 889.5Z" fill="#6e6e6e" stroke="#6e6e6e" stroke-width="1.5" stroke-linejoin="round"/>
</svg>

<!-- ============ <polygon points="693.0,279.0 754.0,279.0 766.0,795.0 700.0,795.0" fill="#63b1b3" stroke="#141414" stroke-width="1.8" stroke-linejoin="round"/>
<polygon points="754.0,279.0 789.0,279.0 795.0,660.0 826.0,636.0 827.0,744.0 767.0,795.0" fill="#c6e4e5" stroke="#141414" stroke-width="1.8" stroke-linejoin="round"/>
<polygon points="755.0,679.0 765.0,679.0 765.0,739.0 757.0,739.0" fill="#960b10" stroke="#141414" stroke-width="1.8" stroke-linejoin="round"/>
<polygon points="757.0,739.0 765.0,739.0 766.0,792.0 758.0,792.0" fill="#21b2b5" stroke="#141414" stroke-width="1.8" stroke-linejoin="round"/>
<polygon points="793.3,535.0 947.5,571.0 947.5,609.0 886.7,651.7 825.0,636.3 795.0,657.3" fill="#e00f16" stroke="#141414" stroke-width="1.8" stroke-linejoin="round"/>
<polygon points="886.7,651.7 946.5,609.0 946.5,716.3 889.0,763.0" fill="#dadada" stroke="#141414" stroke-width="1.8" stroke-linejoin="round"/>
<polygon points="825.0,636.3 886.7,651.7 889.0,763.0 826.7,744.0" fill="#63b1b3" stroke="#141414" stroke-width="1.8" stroke-linejoin="round"/>
<polygon points="889.0,763.0 946.0,716.3 1000.0,731.7 970.0,758.3 948.3,752.3 923.3,772.3" fill="#dadada" stroke="#141414" stroke-width="1.8" stroke-linejoin="round"/>
<polygon points="923.3,772.3 948.3,752.3 948.3,779.7" fill="#f3f5f5" stroke="#141414" stroke-width="1.8" stroke-linejoin="round"/>
<polygon points="948.3,752.3 970.0,758.3 970.0,786.3 948.3,779.7" fill="#63b1b3" stroke="#141414" stroke-width="1.8" stroke-linejoin="round"/>
<polygon points="970.0,758.3 1000.0,731.7 1001.7,795.7 970.0,786.3" fill="#a9d6d6" stroke="#141414" stroke-width="1.8" stroke-linejoin="round"/>
<polygon points="766.7,794.0 826.7,744.0 1003.3,799.0 950.0,849.0" fill="#63b1b3" stroke="#141414" stroke-width="1.8" stroke-linejoin="round"/>
<polygon points="950.0,849.0 1003.3,799.0 1041.7,809.0 986.7,861.7" fill="#c6e4e5" stroke="#141414" stroke-width="1.8" stroke-linejoin="round"/>
<polygon points="986.7,861.7 1041.7,809.0 1039.0,922.0 986.7,922.0" fill="#c6e4e5" stroke="#141414" stroke-width="1.8" stroke-linejoin="round"/>
<polygon points="823.3,812.3 950.0,849.0 986.7,861.7 986.7,922.0 930.0,922.0 825.0,872.3" fill="#dadada" stroke="#141414" stroke-width="1.8" stroke-linejoin="round"/>
<polygon points="760.0,794.0 824.3,813.0 773.8,855.6 760.9,852.7" fill="#0d4055" stroke="#141414" stroke-width="1.8" stroke-linejoin="round"/>
<polygon points="771.0,922.0 822.0,872.2 931.7,910.7 928.3,922.0" fill="#f29b96" stroke="#141414" stroke-width="1.8" stroke-linejoin="round"/>
<polygon points="717.7,902.4 773.8,855.6 822.8,813.8 825.7,872.2 771.0,922.0 717.7,922.0" fill="#f8ca9a" stroke="#141414" stroke-width="1.8" stroke-linejoin="round"/>
<polygon points="680.2,889.4 724.2,852.7 749.4,859.2 704.7,897.4" fill="#960b10" stroke="#141414" stroke-width="1.8" stroke-linejoin="round"/>
<polygon points="704.7,897.4 749.4,859.2 760.9,852.7 773.8,855.6 717.7,902.4" fill="#f9ae1d" stroke="#141414" stroke-width="1.8" stroke-linejoin="round"/>
<polygon points="680.2,889.4 704.7,897.4 717.7,902.4 717.7,922.0 681.0,922.0" fill="#f8ca9a" stroke="#141414" stroke-width="1.8" stroke-linejoin="round"/>
<polygon points="669.1,571.7 719.3,538.0 721.0,585.0" fill="#21b2b5" stroke="#141414" stroke-width="1.8" stroke-linejoin="round"/>
<polygon points="553.8,620.2 693.8,530.6 719.3,537.2 669.1,571.7 753.1,594.0 751.4,597.0 641.3,643.6" fill="#960b10" stroke="#141414" stroke-width="1.8" stroke-linejoin="round"/>
<polygon points="554.3,620.7 641.3,643.6 657.0,922.0 634.3,922.0 632.7,902.0 572.7,877.3" fill="#f29b96" stroke="#141414" stroke-width="1.8" stroke-linejoin="round"/>
<polygon points="641.3,643.6 716.4,594.7 726.9,852.7 724.2,852.7 680.2,889.4 681.0,922.0 657.0,922.0" fill="#63b1b3" stroke="#141414" stroke-width="1.8" stroke-linejoin="round"/>
<polygon points="716.4,594.7 742.7,599.2 749.7,858.0 726.9,852.7" fill="#e9e8e6" stroke="#141414" stroke-width="1.8" stroke-linejoin="round"/>
<polygon points="742.7,599.2 751.4,595.7 760.0,852.7 749.7,859.7" fill="#3e7b7d" stroke="#141414" stroke-width="1.8" stroke-linejoin="round"/>
<polygon points="502.4,279.0 533.6,279.0 536.9,328.6 514.7,340.1 518.0,401.0 511.7,401.9" fill="#e00f16" stroke="#141414" stroke-width="1.8" stroke-linejoin="round"/>
<polygon points="432.4,279.0 502.4,279.0 511.7,401.9 518.8,404.3 480.1,419.2 444.7,410.1" fill="#63b1b3" stroke="#141414" stroke-width="1.8" stroke-linejoin="round"/>
<polygon points="514.7,340.1 617.3,289.6 671.6,299.8 570.7,350.8" fill="#f8ca9a" stroke="#141414" stroke-width="1.8" stroke-linejoin="round"/>
<polygon points="514.7,340.1 570.7,350.8 574.0,415.0 518.8,404.3" fill="#63b1b3" stroke="#141414" stroke-width="1.8" stroke-linejoin="round"/>
<polygon points="570.7,350.8 671.6,299.8 674.9,361.0 574.0,415.0" fill="#e00f16" stroke="#141414" stroke-width="1.8" stroke-linejoin="round"/>
<polygon points="574.0,415.0 674.9,361.0 695.5,362.0 696.3,387.9 626.3,426.6" fill="#f8ca9a" stroke="#141414" stroke-width="1.8" stroke-linejoin="round"/>
<polygon points="574.0,415.0 626.3,426.6 634.6,568.5 586.0,599.6" fill="#e00f16" stroke="#141414" stroke-width="1.8" stroke-linejoin="round"/>
<polygon points="626.3,426.6 696.3,387.9 699.5,533.0 634.6,568.5" fill="#3e7b7d" stroke="#141414" stroke-width="1.8" stroke-linejoin="round"/>
<polygon points="404.0,416.7 432.4,407.6 480.1,419.2 481.8,425.7 443.9,443.9 404.0,438.1" fill="#f9ae1d" stroke="#141414" stroke-width="1.8" stroke-linejoin="round"/>
<polygon points="404.0,437.7 443.3,445.0 481.8,425.7 498.2,600.0 504.8,677.4 513.0,680.7 517.2,730.0 509.8,735.8 437.3,713.6 430.8,661.7 416.8,656.0 404.0,560.0" fill="#f8ca9a" stroke="#141414" stroke-width="1.8" stroke-linejoin="round"/>
<polyline points="443.3,445.0 448.7,503.3" fill="none" stroke="#111" stroke-width="1.4"/>
<polygon points="404.0,493.3 448.7,503.3 404.0,524.3" fill="#63b1b3" stroke="#141414" stroke-width="1.8" stroke-linejoin="round"/>
<polygon points="404.0,560.0 416.8,656.0 404.0,656.0" fill="#63b1b3"/>
<polygon points="480.1,419.2 518.8,404.3 550.9,411.7 518.8,429.0" fill="#3e7b7d" stroke="#141414" stroke-width="1.8" stroke-linejoin="round"/>
<polygon points="480.1,419.2 518.8,429.0 539.4,687.2 504.8,677.4 481.8,425.7" fill="#3e7b7d" stroke="#141414" stroke-width="1.8" stroke-linejoin="round"/>
<polygon points="518.8,429.0 550.9,411.7 574.0,415.0 586.0,599.6 553.8,620.2 556.7,676.5 539.4,687.2" fill="#f8ca9a" stroke="#141414" stroke-width="1.8" stroke-linejoin="round"/>
<polyline points="550.9,411.7 565.7,609.9" fill="none" stroke="#111" stroke-width="1.4"/>
<polygon points="513.0,680.7 536.1,687.2 539.4,733.3 529.5,741.6 509.8,735.8 517.2,730.0" fill="#63b1b3" stroke="#141414" stroke-width="1.8" stroke-linejoin="round"/>
<polygon points="536.1,687.2 541.0,688.9 545.2,730.0 539.4,733.3" fill="#0d4055" stroke="#141414" stroke-width="1.8" stroke-linejoin="round"/>
<polygon points="541.0,688.9 556.7,676.5 561.6,734.2 545.2,730.0" fill="#a1d2d2" stroke="#141414" stroke-width="1.8" stroke-linejoin="round"/>
<polygon points="529.5,741.6 545.2,730.0 561.6,734.2 562.4,753.9" fill="#f3f5f5" stroke="#141414" stroke-width="1.8" stroke-linejoin="round"/>
<polygon points="437.3,713.6 509.8,735.8 529.5,741.6 562.4,753.9 564.0,767.4 483.4,822.6 447.2,810.7" fill="#63b1b3" stroke="#141414" stroke-width="1.8" stroke-linejoin="round"/>
<polygon points="404.0,656.8 416.8,656.0 430.8,661.7 404.0,672.4" fill="#f04b51" stroke="#141414" stroke-width="1.8" stroke-linejoin="round"/>
<polygon points="404.0,672.4 430.8,661.7 458.0,922.0 404.0,922.0" fill="#f29b96" stroke="#141414" stroke-width="1.8" stroke-linejoin="round"/>
<polygon points="447.2,810.7 483.4,822.6 486.7,862.9 451.3,850.5" fill="#c6e4e5" stroke="#141414" stroke-width="1.8" stroke-linejoin="round"/>
<polygon points="483.4,822.6 564.0,767.4 567.4,813.5 511.4,854.7 516.4,922.0 498.2,922.0 493.3,866.2 486.7,862.9" fill="#f9ae1d" stroke="#141414" stroke-width="1.8" stroke-linejoin="round"/>
<polygon points="511.4,854.7 567.4,813.5 573.1,876.9" fill="#f8ca9a" stroke="#141414" stroke-width="1.8" stroke-linejoin="round"/>
<polygon points="511.4,855.5 573.1,877.7 632.7,901.7 634.3,922.0 516.4,922.0" fill="#f04b51" stroke="#141414" stroke-width="1.8" stroke-linejoin="round"/>
<polyline points="573.1,877.7 526.2,917.0" fill="none" stroke="#111" stroke-width="1.4"/>
<polygon points="451.3,850.5 486.7,862.9 493.3,867.0 456.3,892.5" fill="#f29b96" stroke="#141414" stroke-width="1.8" stroke-linejoin="round"/>
<polygon points="456.3,892.5 493.3,867.0 497.4,910.6 457.1,896.6" fill="#f9ae1d" stroke="#141414" stroke-width="1.8" stroke-linejoin="round"/>
<polygon points="457.1,896.6 497.4,910.6 498.0,922.0 458.0,922.0" fill="#f8ca9a" stroke="#141414" stroke-width="1.8" stroke-linejoin="round"/>
<polygon points="458.0,906.0 478.0,912.0 478.0,922.0 458.0,922.0" fill="#f3f5f5" stroke="#141414" stroke-width="1.8" stroke-linejoin="round"/> ============ -->
<div class="a" style="left:410px;top:284px;width:1124px;height:633px;box-shadow:0 0 2px rgba(0,0,0,.25)"></div>
<svg style="left:411px;top:285px;overflow:hidden" width="1122" height="631" viewBox="411 285 1122 631">
<rect x="411" y="285" width="1122" height="631" fill="#a1d2d2"/>
<rect x="792" y="424.5" width="659" height="307" fill="#fff" stroke="#111" stroke-width="2.2"/>
<polygon points="693.0,279.0 754.0,279.0 766.0,795.0 700.0,795.0" fill="#63b1b3" stroke="#141414" stroke-width="1.8" stroke-linejoin="round"/>
<polygon points="754.0,279.0 789.0,279.0 795.0,660.0 826.0,636.0 827.0,744.0 767.0,795.0" fill="#c6e4e5" stroke="#141414" stroke-width="1.8" stroke-linejoin="round"/>
<polygon points="755.0,679.0 765.0,679.0 765.0,739.0 757.0,739.0" fill="#960b10" stroke="#141414" stroke-width="1.8" stroke-linejoin="round"/>
<polygon points="757.0,739.0 765.0,739.0 766.0,792.0 758.0,792.0" fill="#21b2b5" stroke="#141414" stroke-width="1.8" stroke-linejoin="round"/>
<polygon points="793.3,535.0 947.5,571.0 947.5,609.0 886.7,651.7 825.0,636.3 795.0,657.3" fill="#e00f16" stroke="#141414" stroke-width="1.8" stroke-linejoin="round"/>
<polygon points="886.7,651.7 946.5,609.0 946.5,716.3 889.0,763.0" fill="#dadada" stroke="#141414" stroke-width="1.8" stroke-linejoin="round"/>
<polygon points="825.0,636.3 886.7,651.7 889.0,763.0 826.7,744.0" fill="#63b1b3" stroke="#141414" stroke-width="1.8" stroke-linejoin="round"/>
<polygon points="889.0,763.0 946.0,716.3 1000.0,731.7 970.0,758.3 948.3,752.3 923.3,772.3" fill="#dadada" stroke="#141414" stroke-width="1.8" stroke-linejoin="round"/>
<polygon points="923.3,772.3 948.3,752.3 948.3,779.7" fill="#f3f5f5" stroke="#141414" stroke-width="1.8" stroke-linejoin="round"/>
<polygon points="948.3,752.3 970.0,758.3 970.0,786.3 948.3,779.7" fill="#63b1b3" stroke="#141414" stroke-width="1.8" stroke-linejoin="round"/>
<polygon points="970.0,758.3 1000.0,731.7 1001.7,795.7 970.0,786.3" fill="#a9d6d6" stroke="#141414" stroke-width="1.8" stroke-linejoin="round"/>
<polygon points="766.7,794.0 826.7,744.0 1003.3,799.0 950.0,849.0" fill="#63b1b3" stroke="#141414" stroke-width="1.8" stroke-linejoin="round"/>
<polygon points="950.0,849.0 1003.3,799.0 1041.7,809.0 986.7,861.7" fill="#c6e4e5" stroke="#141414" stroke-width="1.8" stroke-linejoin="round"/>
<polygon points="986.7,861.7 1041.7,809.0 1039.0,922.0 986.7,922.0" fill="#c6e4e5" stroke="#141414" stroke-width="1.8" stroke-linejoin="round"/>
<polygon points="823.3,812.3 950.0,849.0 986.7,861.7 986.7,922.0 930.0,922.0 825.0,872.3" fill="#dadada" stroke="#141414" stroke-width="1.8" stroke-linejoin="round"/>
<polygon points="760.0,794.0 824.3,813.0 773.8,855.6 760.9,852.7" fill="#0d4055" stroke="#141414" stroke-width="1.8" stroke-linejoin="round"/>
<polygon points="771.0,922.0 822.0,872.2 931.7,910.7 928.3,922.0" fill="#f29b96" stroke="#141414" stroke-width="1.8" stroke-linejoin="round"/>
<polygon points="717.7,902.4 773.8,855.6 822.8,813.8 825.7,872.2 771.0,922.0 717.7,922.0" fill="#f8ca9a" stroke="#141414" stroke-width="1.8" stroke-linejoin="round"/>
<polygon points="680.2,889.4 724.2,852.7 749.4,859.2 704.7,897.4" fill="#960b10" stroke="#141414" stroke-width="1.8" stroke-linejoin="round"/>
<polygon points="704.7,897.4 749.4,859.2 760.9,852.7 773.8,855.6 717.7,902.4" fill="#f9ae1d" stroke="#141414" stroke-width="1.8" stroke-linejoin="round"/>
<polygon points="680.2,889.4 704.7,897.4 717.7,902.4 717.7,922.0 681.0,922.0" fill="#f8ca9a" stroke="#141414" stroke-width="1.8" stroke-linejoin="round"/>
<polygon points="669.1,571.7 719.3,538.0 721.0,585.0" fill="#21b2b5" stroke="#141414" stroke-width="1.8" stroke-linejoin="round"/>
<polygon points="553.8,620.2 693.8,530.6 719.3,537.2 669.1,571.7 753.1,594.0 751.4,597.0 641.3,643.6" fill="#960b10" stroke="#141414" stroke-width="1.8" stroke-linejoin="round"/>
<polygon points="554.3,620.7 641.3,643.6 657.0,922.0 634.3,922.0 632.7,902.0 572.7,877.3" fill="#f29b96" stroke="#141414" stroke-width="1.8" stroke-linejoin="round"/>
<polygon points="641.3,643.6 716.4,594.7 726.9,852.7 724.2,852.7 680.2,889.4 681.0,922.0 657.0,922.0" fill="#63b1b3" stroke="#141414" stroke-width="1.8" stroke-linejoin="round"/>
<polygon points="716.4,594.7 742.7,599.2 749.7,858.0 726.9,852.7" fill="#e9e8e6" stroke="#141414" stroke-width="1.8" stroke-linejoin="round"/>
<polygon points="742.7,599.2 751.4,595.7 760.0,852.7 749.7,859.7" fill="#3e7b7d" stroke="#141414" stroke-width="1.8" stroke-linejoin="round"/>
<polygon points="502.4,279.0 533.6,279.0 536.9,328.6 514.7,340.1 518.0,401.0 511.7,401.9" fill="#e00f16" stroke="#141414" stroke-width="1.8" stroke-linejoin="round"/>
<polygon points="432.4,279.0 502.4,279.0 511.7,401.9 518.8,404.3 480.1,419.2 444.7,410.1" fill="#63b1b3" stroke="#141414" stroke-width="1.8" stroke-linejoin="round"/>
<polygon points="514.7,340.1 617.3,289.6 671.6,299.8 570.7,350.8" fill="#f8ca9a" stroke="#141414" stroke-width="1.8" stroke-linejoin="round"/>
<polygon points="514.7,340.1 570.7,350.8 574.0,415.0 518.8,404.3" fill="#63b1b3" stroke="#141414" stroke-width="1.8" stroke-linejoin="round"/>
<polygon points="570.7,350.8 671.6,299.8 674.9,361.0 574.0,415.0" fill="#e00f16" stroke="#141414" stroke-width="1.8" stroke-linejoin="round"/>
<polygon points="574.0,415.0 674.9,361.0 695.5,362.0 696.3,387.9 626.3,426.6" fill="#f8ca9a" stroke="#141414" stroke-width="1.8" stroke-linejoin="round"/>
<polygon points="574.0,415.0 626.3,426.6 634.6,568.5 586.0,599.6" fill="#e00f16" stroke="#141414" stroke-width="1.8" stroke-linejoin="round"/>
<polygon points="626.3,426.6 696.3,387.9 699.5,533.0 634.6,568.5" fill="#3e7b7d" stroke="#141414" stroke-width="1.8" stroke-linejoin="round"/>
<polygon points="404.0,416.7 432.4,407.6 480.1,419.2 481.8,425.7 443.9,443.9 404.0,438.1" fill="#f9ae1d" stroke="#141414" stroke-width="1.8" stroke-linejoin="round"/>
<polygon points="404.0,437.7 443.3,445.0 481.8,425.7 498.2,600.0 504.8,677.4 513.0,680.7 517.2,730.0 509.8,735.8 437.3,713.6 430.8,661.7 416.8,656.0 404.0,560.0" fill="#f8ca9a" stroke="#141414" stroke-width="1.8" stroke-linejoin="round"/>
<polyline points="443.3,445.0 448.7,503.3" fill="none" stroke="#111" stroke-width="1.4"/>
<polygon points="404.0,493.3 448.7,503.3 404.0,524.3" fill="#63b1b3" stroke="#141414" stroke-width="1.8" stroke-linejoin="round"/>
<polygon points="404.0,560.0 416.8,656.0 404.0,656.0" fill="#63b1b3"/>
<polygon points="480.1,419.2 518.8,404.3 550.9,411.7 518.8,429.0" fill="#3e7b7d" stroke="#141414" stroke-width="1.8" stroke-linejoin="round"/>
<polygon points="480.1,419.2 518.8,429.0 539.4,687.2 504.8,677.4 481.8,425.7" fill="#3e7b7d" stroke="#141414" stroke-width="1.8" stroke-linejoin="round"/>
<polygon points="518.8,429.0 550.9,411.7 574.0,415.0 586.0,599.6 553.8,620.2 556.7,676.5 539.4,687.2" fill="#f8ca9a" stroke="#141414" stroke-width="1.8" stroke-linejoin="round"/>
<polyline points="550.9,411.7 565.7,609.9" fill="none" stroke="#111" stroke-width="1.4"/>
<polygon points="513.0,680.7 536.1,687.2 539.4,733.3 529.5,741.6 509.8,735.8 517.2,730.0" fill="#63b1b3" stroke="#141414" stroke-width="1.8" stroke-linejoin="round"/>
<polygon points="536.1,687.2 541.0,688.9 545.2,730.0 539.4,733.3" fill="#0d4055" stroke="#141414" stroke-width="1.8" stroke-linejoin="round"/>
<polygon points="541.0,688.9 556.7,676.5 561.6,734.2 545.2,730.0" fill="#a1d2d2" stroke="#141414" stroke-width="1.8" stroke-linejoin="round"/>
<polygon points="529.5,741.6 545.2,730.0 561.6,734.2 562.4,753.9" fill="#f3f5f5" stroke="#141414" stroke-width="1.8" stroke-linejoin="round"/>
<polygon points="437.3,713.6 509.8,735.8 529.5,741.6 562.4,753.9 564.0,767.4 483.4,822.6 447.2,810.7" fill="#63b1b3" stroke="#141414" stroke-width="1.8" stroke-linejoin="round"/>
<polygon points="404.0,656.8 416.8,656.0 430.8,661.7 404.0,672.4" fill="#f04b51" stroke="#141414" stroke-width="1.8" stroke-linejoin="round"/>
<polygon points="404.0,672.4 430.8,661.7 458.0,922.0 404.0,922.0" fill="#f29b96" stroke="#141414" stroke-width="1.8" stroke-linejoin="round"/>
<polygon points="447.2,810.7 483.4,822.6 486.7,862.9 451.3,850.5" fill="#c6e4e5" stroke="#141414" stroke-width="1.8" stroke-linejoin="round"/>
<polygon points="483.4,822.6 564.0,767.4 567.4,813.5 511.4,854.7 516.4,922.0 498.2,922.0 493.3,866.2 486.7,862.9" fill="#f9ae1d" stroke="#141414" stroke-width="1.8" stroke-linejoin="round"/>
<polygon points="511.4,854.7 567.4,813.5 573.1,876.9" fill="#f8ca9a" stroke="#141414" stroke-width="1.8" stroke-linejoin="round"/>
<polygon points="511.4,855.5 573.1,877.7 632.7,901.7 634.3,922.0 516.4,922.0" fill="#f04b51" stroke="#141414" stroke-width="1.8" stroke-linejoin="round"/>
<polyline points="573.1,877.7 526.2,917.0" fill="none" stroke="#111" stroke-width="1.4"/>
<polygon points="451.3,850.5 486.7,862.9 493.3,867.0 456.3,892.5" fill="#f29b96" stroke="#141414" stroke-width="1.8" stroke-linejoin="round"/>
<polygon points="456.3,892.5 493.3,867.0 497.4,910.6 457.1,896.6" fill="#f9ae1d" stroke="#141414" stroke-width="1.8" stroke-linejoin="round"/>
<polygon points="457.1,896.6 497.4,910.6 498.0,922.0 458.0,922.0" fill="#f8ca9a" stroke="#141414" stroke-width="1.8" stroke-linejoin="round"/>
<polygon points="458.0,906.0 478.0,912.0 478.0,922.0 458.0,922.0" fill="#f3f5f5" stroke="#141414" stroke-width="1.8" stroke-linejoin="round"/>
</svg>
<div class="t" style="left:1011px;top:547px;font-size:43.5px;font-weight:bold;color:#0a0a0a;letter-spacing:0.69px">PITCH DECK</div>
<div class="t" style="left:1012px;top:609px;font-size:21px;color:#303030;letter-spacing:0.3px">Mirjam Nilsson</div>

<!-- ============ STATUS BAR ============ -->
<div class="a" style="left:6px;top:931px;width:1697px;height:3px;background:#dedede"></div>
<div class="a" style="left:6px;top:934px;width:1697px;height:33px;background:#f3f3f3;border-radius:0 0 8px 8px"></div>
<div class="a" style="left:1154px;top:935px;width:60px;height:32px;background:#dcdcdc"></div>
<div class="t" style="left:17px;top:944px;font-size:16px;letter-spacing:-0.12px">Slide 1 of 21</div>
<div class="t" style="left:178px;top:944px;font-size:16px;letter-spacing:-0.23px">Accessibility: Good to go</div>
<div class="t" style="left:1086px;top:944px;font-size:16px;letter-spacing:0.1px">Notes</div>
<div class="t" style="left:1608px;top:944px;font-size:16px;letter-spacing:-0.01px">59%</div>
<svg style="left:0;top:930px" width="1707" height="42">
  <g transform="translate(0,-930)">
  <!-- accessibility -->
  <circle cx="160.5" cy="944" r="2.3" fill="none" stroke="#222" stroke-width="1.3"/>
  <path d="M152 946.5 C156 949 165 949 169 946.5 M156.5 948 V953 C156 956 155.5 959 154 960.3 H157 M164 948 V952" fill="none" stroke="#222" stroke-width="1.4" stroke-linecap="round"/>
  <path d="M161.5 956 L165.5 960 L173 953" fill="none" stroke="#222" stroke-width="1.5"/>
  <!-- notes -->
  <path d="M1058.5 953.5 H1082.5 M1058.5 957.5 H1082.5 M1058.5 961.5 H1082.5 M1066.5 949.5 H1074.5" stroke="#333" stroke-width="1.2"/>
  <path d="M1067 942.5 L1070.5 939 L1074 942.5" fill="none" stroke="#333" stroke-width="1.3"/>
  <!-- normal -->
  <rect x="1173.5" y="942" width="20.5" height="17.5" fill="none" stroke="#333" stroke-width="1.3"/>
  <path d="M1177.5 942 V959.5 M1177.5 955.5 H1194" stroke="#333" stroke-width="1.3"/>
  <rect x="1183" y="946" width="6" height="3.5" fill="none" stroke="#333" stroke-width="1.1"/>
  <!-- sorter -->
  <rect x="1233" y="942" width="8.5" height="7" fill="none" stroke="#333" stroke-width="1.3"/>
  <rect x="1246" y="942" width="8.5" height="7" fill="none" stroke="#333" stroke-width="1.3"/>
  <rect x="1233" y="953" width="8.5" height="7" fill="none" stroke="#333" stroke-width="1.3"/>
  <rect x="1246" y="953" width="8.5" height="7" fill="none" stroke="#333" stroke-width="1.3"/>
  <!-- reading -->
  <path d="M1293.5 942 H1302 L1303.5 943.5 L1305 942 H1313.5 V959.5 H1305 L1303.5 961 L1302 959.5 H1293.5Z M1303.5 943.5 V959.5" fill="none" stroke="#333" stroke-width="1.3" stroke-linejoin="round"/>
  <path d="M1296 946.5 H1300.5 M1296 949.5 H1300.5 M1296 952.5 H1300.5 M1296 955.5 H1300.5 M1306.5 946.5 H1311 M1306.5 949.5 H1311 M1306.5 952.5 H1311 M1306.5 955.5 H1311" stroke="#333" stroke-width="1"/>
  <!-- slideshow -->
  <path d="M1353 941.5 H1373.5" stroke="#333" stroke-width="1.3"/>
  <rect x="1355.5" y="941.5" width="15.5" height="12" fill="none" stroke="#333" stroke-width="1.3"/>
  <path d="M1360 946 H1366 M1363.3 953.5 V960 M1358 960 H1368.5" stroke="#333" stroke-width="1.3"/>
  <!-- zoom -->
  <path d="M1402 950.5 H1413.5 M1422 950.5 H1569.5 M1577 950.5 H1590.5 M1583.7 943.5 V957.5 M1496 946.5 V954.5" stroke="#555" stroke-width="1.2"/>
  <rect x="1459.5" y="941.5" width="8.5" height="18" fill="#5f5f5f"/>
  <!-- fit -->
  <rect x="1664" y="945" width="9" height="10" fill="none" stroke="#222" stroke-width="1.4"/>
  <path d="M1665.5 941.5 L1668.5 939 L1671.5 941.5 M1665.5 958.5 L1668.5 961 L1671.5 958.5 M1660 947 L1657.3 950 L1660 953 M1677 947 L1679.7 950 L1677 953" fill="none" stroke="#222" stroke-width="1.4"/>
  </g>
</svg>
</body></html>
